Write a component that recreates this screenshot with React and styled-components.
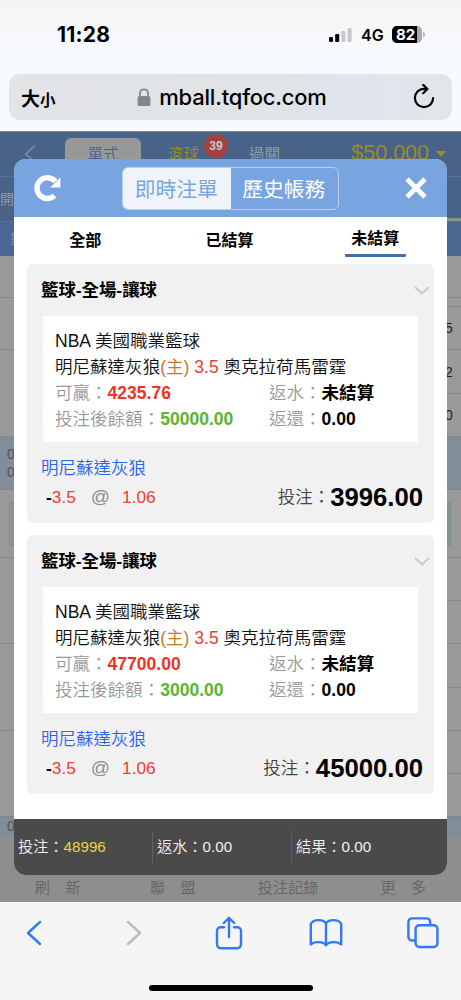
import styled, { createGlobalStyle } from "styled-components";

const BETS = [
  { id: 1, win: "4235.76", balance: "50000.00", stake: "3996.00" },
  { id: 2, win: "47700.00", balance: "3000.00", stake: "45000.00" },
];

const TABS = ["全部", "已結算", "未結算"];

const TOTALS = [
  { label: "投注：", value: "48996", highlight: true },
  { label: "返水：", value: "0.00" },
  { label: "結果：", value: "0.00" },
];

const LEFT_CELLS = [
  { h: 42 },
  { h: 52 },
  { h: 87 },
  { h: 53, blue: true, text: ["0", "0"] },
  { h: 68, slip: true },
  { h: 86 },
  { h: 87 },
  { h: 86 },
  { h: 19, blue: true, text: ["0"] },
];

const RIGHT_CELLS = [
  { h: 42 },
  { h: 9 },
  { h: 43, text: ["5"] },
  { h: 44, text: ["2"] },
  { h: 43, text: ["0"] },
  { h: 53, blue: true },
  { h: 68, slip: true },
  { h: 43 },
  { h: 43 },
  { h: 44 },
  { h: 43 },
  { h: 43 },
  { h: 43 },
  { h: 19, blue: true },
];

const App = () => {
  return (
    <Screen>
      <GlobalStyle />
      <StatusBar>
        <Time>11:28</Time>
        <Status>
          <svg width="24" height="16" viewBox="0 0 24 16">
            <rect x="0" y="10" width="4" height="5" rx="1.3" fill="#000" />
            <rect x="6.2" y="7" width="4" height="8" rx="1.3" fill="#000" />
            <rect x="12.4" y="4" width="4" height="11" rx="1.3" fill="#c6c7c8" />
            <rect x="18.6" y="1" width="4" height="14" rx="1.3" fill="#c6c7c8" />
          </svg>
          <Network>4G</Network>
          <Battery>
            <Level>82</Level>
          </Battery>
          <Nub />
        </Status>
      </StatusBar>
      <AddressWrap>
        <AddressBar>
          <TextSize>
            大<small>小</small>
          </TextSize>
          <Address>
            <svg width="14" height="19" viewBox="0 0 14 19">
              <path d="M3 9V5.3a4 4 0 0 1 8 0V9" fill="none" stroke="#85868a" strokeWidth="1.8" />
              <rect x="0.6" y="8" width="12.8" height="10" rx="1.8" fill="#85868a" />
            </svg>
            <span>mball.tqfoc.com</span>
          </Address>
          <svg width="24" height="26" viewBox="0 0 24 26" fill="none" stroke="#000" strokeWidth="2.2" strokeLinecap="round" strokeLinejoin="round">
            <path d="M14.5 4.9H12A9.1 9.1 0 1 0 21.1 14" />
            <path d="M11.2 0.9l4.2 4.1-4.2 4.2" />
          </svg>
        </AddressBar>
      </AddressWrap>

      <Site>
        <SiteNav>
          <svg width="12" height="18" viewBox="0 0 12 18" fill="none" stroke="#8996a8" strokeWidth="1.2">
            <path d="M11 1.5L1.5 10l9.5 8" />
          </svg>
          <SiteTab>單式</SiteTab>
          <SiteLink $gold>
            滾球
            <Badge>39</Badge>
          </SiteLink>
          <SiteLink>過關</SiteLink>
          <Credit>
            $50,000
            <Caret />
          </Credit>
        </SiteNav>
        <SubNav>開</SubNav>
        <LeagueBar>對</LeagueBar>
        <Board>
          <Column>
            {LEFT_CELLS.map((cell, i) => (
              <Cell key={i} $h={cell.h} $blue={cell.blue}>
                {cell.slip && <Slip />}
                {cell.text && cell.text.map((t, n) => <span key={n}>{t}</span>)}
              </Cell>
            ))}
          </Column>
          <Column $right>
            {RIGHT_CELLS.map((cell, i) => (
              <Cell key={i} $h={cell.h} $blue={cell.blue} $right>
                {cell.slip && <Slip $right />}
                {cell.text && cell.text.map((t, n) => <span key={n}>{t}</span>)}
              </Cell>
            ))}
          </Column>
        </Board>
        <SiteFooter>
          <span>刷　新</span>
          <span>聯　盟</span>
          <span>投注記錄</span>
          <span>更　多</span>
        </SiteFooter>

        <Modal>
          <ModalHeader>
            <svg width="28" height="28" viewBox="0 0 28 28">
              <path d="M20.6 21.6A10.4 10.4 0 1 1 21.4 7.400" fill="none" stroke="#fff" strokeWidth="5.4" />
              <path d="M26.400 3.600v9.800H15.800l3.600-3 4-4z" fill="#fff" />
            </svg>
            <Segments>
              <Segment $active>即時注單</Segment>
              <Segment>歷史帳務</Segment>
            </Segments>
            <svg width="22" height="22" viewBox="0 0 22 22" stroke="#fff" strokeWidth="4.8">
              <path d="M2 2l18 18M20 2L2 20" />
            </svg>
          </ModalHeader>
          <Tabs>
            {TABS.map((tab) => (
              <Tab key={tab} $active={tab === "未結算"}>
                <span>{tab}</span>
              </Tab>
            ))}
          </Tabs>
          <BetList>
            {BETS.map((bet) => (
              <BetCard key={bet.id} {...bet} />
            ))}
          </BetList>
          <Totals>
            {TOTALS.map((total) => (
              <Total key={total.label} $highlight={total.highlight}>
                {total.label}
                <b>{total.value}</b>
              </Total>
            ))}
          </Totals>
        </Modal>
      </Site>

      <BrowserNav>
        <NavIcons>
          <svg width="16" height="26" viewBox="0 0 16 26" stroke="#3478f6">
            <path d="M14 2L2 13l12 11" />
          </svg>
          <svg width="16" height="26" viewBox="0 0 16 26" stroke="#bcbcbd">
            <path d="M2 2l12 11L2 24" />
          </svg>
          <svg width="28" height="34" viewBox="0 0 28 34" stroke="#3478f6">
            <path d="M9 11.2H5.6A3.6 3.6 0 0 0 2 14.8v13.8a3.6 3.6 0 0 0 3.6 3.6h16.8a3.6 3.6 0 0 0 3.6-3.6V14.8a3.6 3.6 0 0 0-3.6-3.6H19" />
            <path d="M14 21V2M8.8 7L14 1.8 19.2 7" />
          </svg>
          <svg width="34" height="30" viewBox="0 0 34 30" stroke="#3478f6">
            <path d="M17 27.3c-2.6-4-12-4.2-15.2-.8V5.8C4.6 1 14.5 1 17 5.6c2.5-4.6 12.4-4.6 15.2.2v20.7c-3.2-3.4-12.6-3.2-15.2.8zM17 5.6v21.5" />
          </svg>
          <svg width="32" height="32" viewBox="0 0 32 32" stroke="#3478f6">
            <path d="M8.6 23.5H5A3.6 3.6 0 0 1 1.4 19.9V5A3.6 3.6 0 0 1 5 1.4h14.6A3.6 3.6 0 0 1 23.2 5v3" />
            <rect x="8.6" y="8.2" width="21.8" height="21.8" rx="3.6" />
          </svg>
        </NavIcons>
        <HomeBar />
      </BrowserNav>
    </Screen>
  );
};

const BetCard = ({ win, balance, stake }) => (
  <Card>
    <CardTitle>
      籃球-全場-讓球
      <svg width="16" height="9" viewBox="0 0 16 9" fill="none" stroke="#c8c8c8" strokeWidth="1.8">
        <path d="M1 1l7 6.5L15 1" />
      </svg>
    </CardTitle>
    <Details>
      <p>NBA 美國職業籃球</p>
      <p>
        明尼蘇達灰狼<Home>(主)</Home> <Red>3.5</Red> 奧克拉荷馬雷霆
      </p>
      <Pair>
        <Field $color="#ee3323">可贏：<b>{win}</b></Field>
        <Field>返水：<b>未結算</b></Field>
      </Pair>
      <Pair>
        <Field $color="#57b530">投注後餘額：<b>{balance}</b></Field>
        <Field>返還：<b>0.00</b></Field>
      </Pair>
    </Details>
    <Team>明尼蘇達灰狼</Team>
    <BetRow>
      <Odds>
        <b>-</b>
        <Red>3.5</Red>
        <At>@</At>
        <Red>1.06</Red>
      </Odds>
      <Stake>
        投注：<b>{stake}</b>
      </Stake>
    </BetRow>
  </Card>
);

const GlobalStyle = createGlobalStyle`
  * {
    box-sizing: border-box;
  }

  body {
    margin: 0;
    font-family: "Liberation Sans", "Noto Sans CJK TC", sans-serif;
    font-weight: 350;
    color: #111;
  }

  p {
    margin: 0;
  }

  svg {
    display: block;
    flex: none;
  }
`;

const Screen = styled.div`
  display: flex;
  flex-direction: column;
  width: 461px;
  height: 1000px;
  overflow: hidden;
  background: linear-gradient(#f5f5f5, #f7fafe 70px, #f8fbfe 130px);
`;

const StatusBar = styled.div`
  display: flex;
  justify-content: space-between;
  align-items: center;
  height: 74px;
  padding: 0 36px 5px 57px;
  font-family: Inter, sans-serif;
  color: #000;
`;

const Time = styled.div`
  font-size: 21px;
  font-weight: 700;
  letter-spacing: 0.2px;
`;

const Status = styled.div`
  display: flex;
  align-items: center;
`;

const Network = styled.span`
  width: 39px;
  padding-left: 8px;
  font-size: 16px;
  font-weight: 600;
`;

const Battery = styled.div`
  width: 30px;
  height: 17px;
  border-radius: 5px;
  background: #a9aaab;
  overflow: hidden;
`;

const Level = styled.div`
  width: 25px;
  height: 17px;
  padding-left: 4px;
  background: #000;
  color: #fff;
  font-size: 15px;
  line-height: 17px;
  font-weight: 700;
`;

const Nub = styled.div`
  width: 2px;
  height: 5px;
  margin-left: 1px;
  border-radius: 0 2px 2px 0;
  background: #b5b6b7;
`;

const AddressWrap = styled.div`
  height: 57px;
  padding: 0 9px;
`;

const AddressBar = styled.div`
  display: flex;
  align-items: center;
  justify-content: space-between;
  height: 46px;
  padding: 0 16px 0 12px;
  border-radius: 11px;
  background: linear-gradient(90deg, #e2e4e6, #e0e3e7 60%, #dfe4ee 75%, #e2e5e9);
  color: #000;
`;

const TextSize = styled.div`
  width: 36px;
  font-size: 19px;
  font-weight: 700;
  white-space: nowrap;

  small {
    font-size: 15.5px;
  }
`;

const Address = styled.div`
  display: flex;
  align-items: center;
  gap: 8px;
  padding-right: 5px;
  font: 500 22px Inter, sans-serif;
  letter-spacing: -0.2px;
`;

const Site = styled.div`
  position: relative;
  display: flex;
  flex-direction: column;
  height: 771px;
  background: #999;
  overflow: hidden;
`;

const SiteNav = styled.div`
  display: flex;
  height: 46px;
  padding: 12px 15px 0 24px;
  border-top: 1px solid #7e8791;
  border-bottom: 1px solid #577297;
  background: #496388;
  font-size: 15.5px;
`;

const SiteTab = styled.div`
  width: 76px;
  height: 33px;
  margin: -6px 0 0 29px;
  border-radius: 6px;
  background: #989898;
  color: #496388;
  text-align: center;
  line-height: 33px;
`;

const SiteLink = styled.div`
  position: relative;
  margin-left: ${({ $gold }) => ($gold ? 27 : 50)}px;
  line-height: 22px;
  color: ${({ $gold }) => ($gold ? "#998c24" : "#94a0b0")};
`;

const Badge = styled.div`
  position: absolute;
  left: 36px;
  top: -10px;
  width: 24px;
  height: 24px;
  border-radius: 50%;
  background: #a34242;
  color: #c9c9c9;
  font-size: 12px;
  font-weight: 700;
  line-height: 24px;
  text-align: center;
`;

const Credit = styled.div`
  display: flex;
  gap: 7px;
  margin-left: auto;
  color: #998c24;
  font-size: 21.5px;
  line-height: 18px;
`;

const Caret = styled.div`
  margin-top: 7px;
  border: 5px solid transparent;
  border-top: 6px solid #998c24;
  border-bottom: 0;
  height: 0;
`;

const SubNav = styled.div`
  height: 45px;
  border-bottom: 1px solid #577297;
  background: linear-gradient(90deg, #496388 50%, #8f9194 50%) bottom / 100% 3px no-repeat #496388;
  color: #919dac;
  font-size: 14px;
  line-height: 45px;
`;

const LeagueBar = styled.div`
  height: 34px;
  padding-left: 10px;
  background: #4a6793;
  color: #7f90aa;
  font-size: 14px;
  line-height: 34px;
`;

const Board = styled.div`
  display: flex;
  justify-content: space-between;
  height: 580px;
`;

const Column = styled.div`
  width: ${({ $right }) => ($right ? 20 : 22)}px;
`;

const Cell = styled.div`
  display: flex;
  flex-direction: column;
  justify-content: center;
  height: ${({ $h }) => $h}px;
  padding-left: ${({ $right }) => ($right ? 4 : 7)}px;
  border-bottom: 1px solid #858585;
  background: ${({ $blue }) => ($blue ? "#818d98" : "#999")};
  color: ${({ $blue }) => ($blue ? "#4f5357" : "#222")};
  font-size: 14px;
  line-height: 18px;
`;

const Slip = styled.div`
  width: ${({ $right }) => ($right ? 10 : 20)}px;
  height: 44px;
  margin-left: ${({ $right }) => ($right ? -4 : 2)}px;
  border: 1.5px solid #76928a;
  ${({ $right }) => $right && "border-left: 0;"}
  background: #8b9491;
`;

const SiteFooter = styled.div`
  display: grid;
  grid-template-columns: repeat(4, 1fr);
  height: 66px;
  padding-top: 40px;
  background: #8e8e8e;
  color: #646464;
  font-size: 15.2px;
  line-height: 23px;
  text-align: center;
`;

const Modal = styled.div`
  position: absolute;
  top: 28px;
  left: 14px;
  display: flex;
  flex-direction: column;
  width: 433px;
  height: 716px;
  border-radius: 12px;
  background: #fff;
  overflow: hidden;
`;

const ModalHeader = styled.div`
  display: flex;
  align-items: center;
  justify-content: space-between;
  height: 58px;
  padding: 0 20px 0 20px;
  background: #78a5df;
`;

const Segments = styled.div`
  display: flex;
  width: 217px;
  height: 43px;
  margin: 1px 0 0 -6px;
  border: 1px solid #b8d0f0;
  border-radius: 6px;
  overflow: hidden;
`;

const Segment = styled.div`
  flex: 1;
  background: ${({ $active }) => ($active ? "#f1f4fc" : "transparent")};
  color: ${({ $active }) => ($active ? "#78a5df" : "#fff")};
  font-size: 20.8px;
  font-weight: 400;
  line-height: 44px;
  text-align: center;
  text-indent: -1px;
`;

const Tabs = styled.div`
  display: grid;
  grid-template-columns: repeat(3, 1fr);
  height: 47px;
`;

const Tab = styled.div`
  text-align: center;
  font-size: 16px;
  font-weight: 700;
  color: #000;

  span {
    display: inline-block;
    width: 61px;
    height: ${({ $active }) => ($active ? 40 : 44)}px;
    margin-left: ${({ $active }) => ($active ? 1 : -2)}px;
    line-height: ${({ $active }) => ($active ? 44 : 48)}px;
    border-bottom: 3px solid ${({ $active }) => ($active ? "#3f70a4" : "transparent")};
    border-radius: 1px;
  }
`;

const BetList = styled.div`
  display: flex;
  flex-direction: column;
  gap: 12px;
  height: 555px;
  padding: 0 13px;
`;

const Card = styled.div`
  height: 259px;
  padding: 0 11px 0 15px;
  border-radius: 6px;
  background: #f1f1f1;
`;

const CardTitle = styled.div`
  display: flex;
  justify-content: space-between;
  height: 52px;
  margin: 0 -7px 0 -1px;
  font-size: 17.4px;
  line-height: 52px;
  font-weight: 700;
  color: #000;

  svg {
    margin-top: 22px;
  }
`;

const Details = styled.div`
  width: 375px;
  height: 126px;
  margin-left: 1px;
  padding: 12px;
  background: #fff;
  font-size: 17.55px;
  line-height: 26px;
  white-space: nowrap;

  p {
    height: 26px;
  }
`;

const Home = styled.span`
  color: #c07a2c;
`;

const Red = styled.span`
  color: #ee3f32;
`;

const Pair = styled.div`
  display: grid;
  grid-template-columns: 214px 1fr;
  height: 26px;
`;

const Field = styled.div`
  color: #999;

  b {
    color: ${({ $color }) => $color || "#000"};
  }
`;

const Team = styled.div`
  height: 39px;
  margin-left: -1px;
  padding-top: 13px;
  font-size: 17.5px;
  line-height: 26px;
  color: #2f63ee;
`;

const BetRow = styled.div`
  display: flex;
  justify-content: space-between;
  align-items: center;
  height: 32px;
`;

const Odds = styled.div`
  display: flex;
  align-items: center;
  padding-left: 4px;
  font-size: 17.3px;
  color: #000;
`;

const At = styled.span`
  margin: 0 12px 0 15px;
  font-size: 19px;
  color: #8f8f8f;
`;

const Stake = styled.div`
  display: flex;
  font-size: 17.5px;
  line-height: 31px;
  color: #444;

  b {
    font-size: 25.7px;
    color: #000;
  }
`;

const Totals = styled.div`
  display: flex;
  align-items: center;
  height: 56px;
  background: #4a4a4a;
`;

const Total = styled.div`
  width: 139px;
  height: 33px;
  padding-left: 4px;
  border-right: 1px solid #606060;
  color: #f1f1f1;
  font-size: 15.2px;
  line-height: 32px;

  &:last-child {
    border: 0;
  }

  b {
    font-weight: 400;
    color: ${({ $highlight }) => ($highlight ? "#e9d63c" : "#f1f1f1")};
  }
`;

const BrowserNav = styled.div`
  display: flex;
  flex-direction: column;
  align-items: center;
  justify-content: space-between;
  height: 98px;
  padding: 8px 0 9px;
  background: #f5f5f5;
`;

const NavIcons = styled.div`
  display: grid;
  grid-template-columns: repeat(5, 97.4px);
  justify-content: center;
  justify-items: center;
  align-items: center;
  height: 45px;
  margin-right: 4px;

  svg {
    fill: none;
    stroke-width: 2.4px;
    stroke-linecap: round;
    stroke-linejoin: round;
  }

  svg:nth-child(2) {
    margin-left: 6px;
  }
`;

const HomeBar = styled.div`
  width: 164px;
  height: 6px;
  border-radius: 3px;
  background: #000;
`;

export default App;
